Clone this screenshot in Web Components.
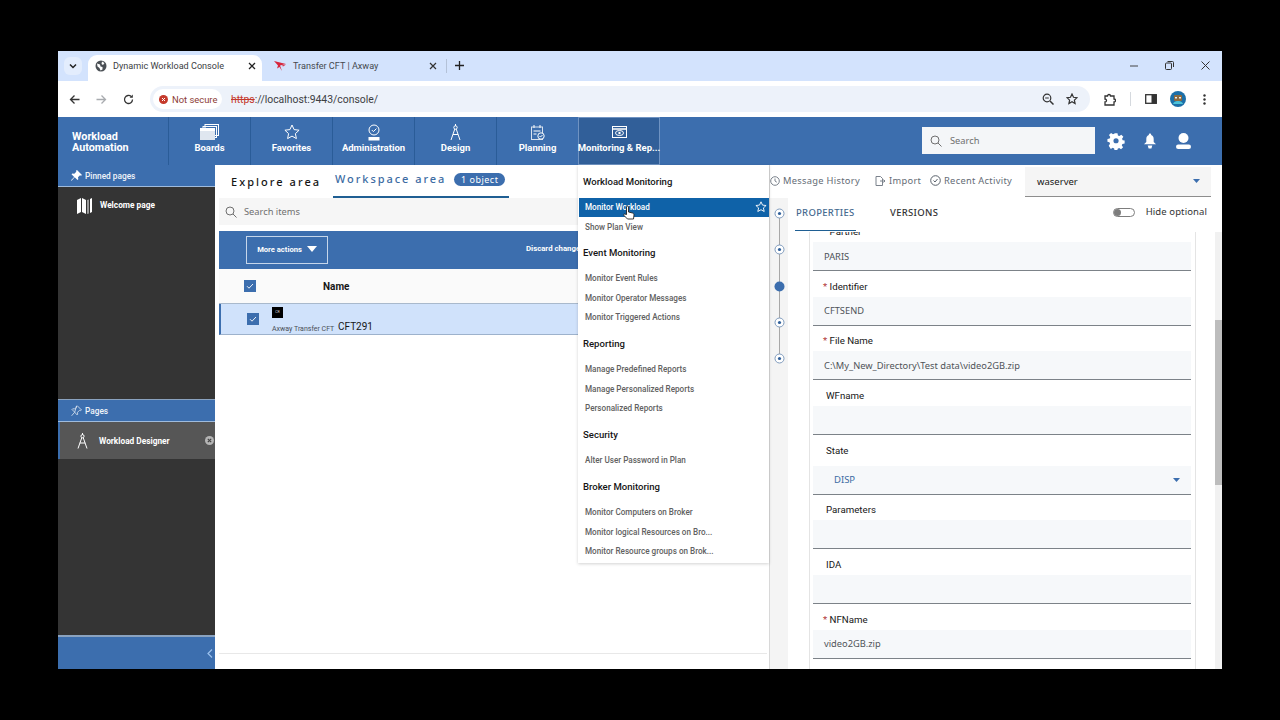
<!DOCTYPE html>
<html>
<head>
<meta charset="utf-8">
<title>Dynamic Workload Console</title>
<style>
  html, body { margin: 0; height: 720px; background: #000; overflow: hidden; }
  body { padding: 51px 58px 51px; box-sizing: border-box; font-family: Roboto, "Liberation Sans", sans-serif; }
  #win { width: 1164px; height: 618px; display: flex; flex-direction: column; background: #fff; overflow: hidden; }
  svg { display: block; }
</style>
</head>
<body>
<div id="win">
  <browser-chrome></browser-chrome>
  <app-header></app-header>
  <app-main></app-main>
</div>

<script>
function shadow(el, html) {
  el.attachShadow({mode: 'open'}).innerHTML = html;
}

class BrowserChrome extends HTMLElement {
  constructor() {
    super();
    shadow(this, `
    <style>
      :host { display: block; font-family: Roboto, "Noto Sans", sans-serif; color: #3c4043; }
      svg { display: block; flex: none; }
      #tabs { height: 30px; background: #d3e3fd; display: flex; align-items: flex-end; position: relative; }
      #menu { width: 18px; height: 18px; margin: 0 6px 6px 6px; background: #e3edfd; border-radius: 6px; display: grid; place-items: center; }
      .tab { height: 26px; display: flex; align-items: center; font-size: 9.100px; box-sizing: border-box; padding-bottom: 4px; }
      #t1 { width: 174px; background: #fff; border-radius: 9px 9px 0 0; padding-left: 7px; }
      #t1 span { margin-left: 6px; flex: 1; }
      #t1 svg:last-child { margin-right: 6px; }
      #t2 { width: 184px; padding-left: 12px; color: #45494e; }
      #t2 span { margin-left: 6px; flex: 1; }
      #t2 svg:last-child { margin-right: 9px; }
      #sep { width: 1px; height: 14px; background: #b4c2d8; margin: 0 8px 8px 0; }
      #plus { margin-bottom: 11px; }
      #ctl { margin-left: auto; display: flex; align-items: center; gap: 27px; margin-right: 12px; margin-bottom: 11px; }
      #bar { height: 36px; display: flex; align-items: center; background: #fff; }
      #nav { display: flex; align-items: center; margin-left: 11px; gap: 16px; width: 81px; }
      #omni { width: 940px; height: 26px; border-radius: 13px; background: #edf2fa; display: flex; align-items: center; box-sizing: border-box; }
      #chip { margin-left: 3px; width: 69px; height: 20px; background: #fff; border-radius: 10px; display: flex; align-items: center; gap: 4px; padding-left: 6px; box-sizing: border-box; font-size: 9.400px; color: #8c3b34; white-space: nowrap; }
      #url { margin-left: 9px; font-size: 10.400px; color: #3c4043; flex: 1; }
      #url s { color: #c5392b; }
      #omni svg.z { margin-right: 12px; }
      #right { display: flex; align-items: center; margin-left: 13px; }
      #div { width: 1px; height: 14px; background: #d5d9de; margin: 0 14px; }
    </style>
    <div id="tabs">
      <div id="menu"><svg width="10" height="10" viewBox="0 0 10 10"><path d="M2 3.500l3 3 3-3" fill="none" stroke="#222" stroke-width="1.500"/></svg></div>
      <div class="tab" id="t1">
        <svg width="12" height="12" viewBox="0 0 12 12"><circle cx="6" cy="6" r="5.500" fill="#4a4f54"/><path d="M2 3.500l3 1 .5 2 2 .5v2.500l-2 1-1-2.500L2.500 6.500zM7 1.500l2.500 1.500-1.500 2-1.500-1z" fill="#fff"/></svg>
        <span>Dynamic Workload Console</span>
        <svg width="8" height="8" viewBox="0 0 8 8"><path d="M1 1l6 6M7 1l-6 6" stroke="#222" stroke-width="1.300"/></svg>
      </div>
      <div class="tab" id="t2">
        <svg width="13" height="12" viewBox="0 0 13 12"><path d="M0 1l12 3-6 1.500L8 11 5.500 7 3 8.500 4 5.500zM12 4.500L9 6.500l-1-1z" fill="#d7263d"/></svg>
        <span>Transfer CFT | Axway</span>
        <svg width="8" height="8" viewBox="0 0 8 8"><path d="M1 1l6 6M7 1l-6 6" stroke="#333" stroke-width="1.200"/></svg>
      </div>
      <div id="sep"></div>
      <svg id="plus" width="9" height="9" viewBox="0 0 9 9"><path d="M4.500 0v9M0 4.500h9" stroke="#222" stroke-width="1.300"/></svg>
      <div id="ctl">
        <svg width="8" height="8" viewBox="0 0 8 8"><path d="M0 4h8" stroke="#444" stroke-width="1"/></svg>
        <svg width="9" height="9" viewBox="0 0 9 9"><rect x=".5" y="2" width="6" height="6.500" rx="1" fill="none" stroke="#333"/><path d="M2.500 .5h5a1 1 0 0 1 1 1V6" fill="none" stroke="#333"/></svg>
        <svg width="9" height="9" viewBox="0 0 9 9"><path d="M.5 .5l8 8M8.500 .5l-8 8" stroke="#333" stroke-width="1"/></svg>
      </div>
    </div>
    <div id="bar">
      <div id="nav">
        <svg width="11" height="11" viewBox="0 0 11 11"><path d="M10.500 5.500H1.500M5.500 1.500l-4 4 4 4" fill="none" stroke="#333" stroke-width="1.300"/></svg>
        <svg width="11" height="11" viewBox="0 0 11 11"><path d="M.5 5.500h9M5.500 1.500l4 4-4 4" fill="none" stroke="#a8abaf" stroke-width="1.300"/></svg>
        <svg width="11" height="11" viewBox="0 0 11 11"><path d="M9.500 5.500a4 4 0 1 1-1.200-2.900" fill="none" stroke="#333" stroke-width="1.300"/><path d="M9.800 .5v3.200H6.600z" fill="#333"/></svg>
      </div>
      <div id="omni">
        <div id="chip">
          <svg width="9" height="9" viewBox="0 0 9 9"><circle cx="4.500" cy="4.500" r="4.500" fill="#c5392b"/><path d="M3 3l3 3M6 3L3 6" stroke="#fff"/></svg>
          <span>Not secure</span>
        </div>
        <div id="url"><s>https</s>://localhost:9443/console/</div>
        <svg class="z" width="12" height="12" viewBox="0 0 12 12"><circle cx="5" cy="5" r="3.800" fill="none" stroke="#333" stroke-width="1.200"/><path d="M8 8l3.500 3.500" stroke="#333" stroke-width="1.500"/><path d="M3.200 5h3.600" stroke="#333"/></svg>
        <svg class="z" width="12" height="12" viewBox="0 0 12 12"><path d="M6 1l1.500 3.300 3.500.4-2.600 2.400.7 3.500L6 8.800l-3.100 1.800.7-3.500L1 4.700l3.500-.4z" fill="none" stroke="#333" stroke-width="1.200"/></svg>
      </div>
      <div id="right">
        <svg width="13" height="13" viewBox="0 0 13 13"><path d="M2 3h2.500a1.500 1.500 0 0 1 3 0H11v3a1.500 1.500 0 0 1 0 3v3H2V9a1.500 1.500 0 0 0 0-3z" fill="none" stroke="#333" stroke-width="1.300"/></svg>
        <div id="div"></div>
        <svg width="12" height="10" viewBox="0 0 12 10"><rect x=".7" y=".7" width="10.600" height="8.600" fill="none" stroke="#333" stroke-width="1.300"/><rect x="6.500" y=".7" width="5" height="8.600" fill="#333"/></svg>
        <svg style="margin-left:13px" width="16" height="16" viewBox="0 0 16 16"><circle cx="8" cy="8" r="8" fill="#1c6fa8"/><rect x="4" y="4" width="8" height="6" rx="1" fill="#8c6a3f"/><rect x="5" y="6" width="2" height="1.500" fill="#eee"/><rect x="9" y="6" width="2" height="1.500" fill="#eee"/><path d="M3 13a5 3 0 0 1 10 0z" fill="#4cc2d8"/></svg>
        <svg style="margin-left:17px" width="3" height="11" viewBox="0 0 3 11"><circle cx="1.500" cy="1.500" r="1.200" fill="#333"/><circle cx="1.500" cy="5.500" r="1.200" fill="#333"/><circle cx="1.500" cy="9.500" r="1.200" fill="#333"/></svg>
      </div>
    </div>`);
  }
}
customElements.define('browser-chrome', BrowserChrome);

class NavTile extends HTMLElement {
  constructor() {
    super();
    shadow(this, `
    <style>
      :host { display: flex; flex-direction: column; align-items: center; width: 82px; height: 48px; box-sizing: border-box; border-left: 1px solid #2a5c98; color: #fff; }
      :host([active]) { background: #315f99; border: 1px solid #6f93c2; }
      #i { height: 20px; margin-top: 5px; display: flex; align-items: center; }
      #l { font-size: 9.500px; font-weight: 700; white-space: nowrap; line-height: 12px; }
      :host([active]) #i { margin-top: 4px; }
    </style>
    <div id="i"><slot name="icon"></slot></div>
    <div id="l"><slot></slot></div>`);
  }
}
customElements.define('nav-tile', NavTile);

class AppHeader extends HTMLElement {
  constructor() {
    super();
    const s = 'fill="none" stroke="#fff" stroke-width="1"';
    shadow(this, `
    <style>
      :host { display: flex; height: 48px; background: #3c6eae; color: #fff; font-family: Roboto, sans-serif; align-items: stretch; }
      #brand { width: 110px; box-sizing: border-box; padding: 14px 0 0 14px; font-size: 10.800px; font-weight: 700; line-height: 11px; }
      #end { margin-left: auto; display: flex; align-items: center; padding-right: 31px; }
      #search { width: 173px; height: 27px; background: #f4f6f8; display: flex; align-items: center; gap: 7px; padding-left: 8px; box-sizing: border-box; color: #6f6f6f; font-size: 9.300px; margin-right: 12px; font-family: "Noto Sans", sans-serif; margin-top: -1px; }
      svg { display: block; }
    </style>
    <div id="brand">Workload<br>Automation</div>
    <nav-tile><svg slot="icon" width="19" height="16" viewBox="0 0 19 16"><rect x="5" y=".5" width="13.500" height="11" ${s}/><rect x="3" y="2.500" width="13.500" height="11" ${s}/><rect x="0" y="4" width="15" height="12" fill="#dfe6ef"/><rect x="0" y="4" width="15" height="3" fill="#fff"/></svg>Boards</nav-tile>
    <nav-tile><svg slot="icon" width="16" height="16" viewBox="0 0 16 16"><path d="M8 1l2.100 4.600 5 .6-3.700 3.400 1 5L8 12.100l-4.400 2.500 1-5L.9 6.200l5-.6z" ${s}/></svg>Favorites</nav-tile>
    <nav-tile><svg slot="icon" width="14" height="17" viewBox="0 0 14 17"><circle cx="7" cy="6" r="5" ${s}/><path d="M4.800 6l1.600 1.600 3-3" ${s}/><rect x="1.500" y="13" width="11" height="3.500" fill="#fff"/></svg>Administration</nav-tile>
    <nav-tile><svg slot="icon" width="11" height="17" viewBox="0 0 11 17"><circle cx="5.500" cy="3.500" r="1.700" ${s}/><path d="M5.500 0v2M4.800 5L1 16M6.200 5L10 16M3 10.500h5" ${s}/></svg>Design</nav-tile>
    <nav-tile><svg slot="icon" width="14" height="15" viewBox="0 0 14 15"><rect x=".5" y="2" width="11" height="12.500" ${s} stroke-opacity=".8"/><path d="M3 0v3M9 0v3M2.500 6h7M2.500 9h3" ${s}/><circle cx="10" cy="11" r="3.200" fill="#3c6eae" stroke="#fff"/><path d="M8.500 11l1 1 2-2" ${s}/></svg>Planning</nav-tile>
    <nav-tile active><svg slot="icon" width="15" height="12" viewBox="0 0 15 12"><rect x=".5" y=".5" width="14" height="11" ${s}/><path d="M.5 3h14" stroke="#fff" stroke-width="1.500"/><ellipse cx="7.500" cy="7" rx="4" ry="2.500" ${s}/><circle cx="7.500" cy="7" r="1.200" fill="#fff"/></svg>Monitoring &amp; Rep...</nav-tile>
    <div id="end">
      <div id="search"><svg width="12" height="12" viewBox="0 0 12 12"><circle cx="5" cy="5" r="4" fill="none" stroke="#6f6f6f"/><path d="M8 8l3.500 3.500" stroke="#6f6f6f"/></svg><span style="margin-left:1px">Search</span></div>
      <svg width="18" height="18" viewBox="0 0 18 18"><path fill="#fff" fill-rule="evenodd" d="M7.300 0h3.400l.5 2.600 1.700.7 2.200-1.500 2.400 2.400-1.500 2.200.7 1.700 2.300.5v3.400l-2.600.5-.7 1.700 1.500 2.200-2.400 2.400-2.200-1.500-1.700.7-.5 2.300H7.300l-.5-2.600-1.700-.7-2.200 1.500L.5 14.500l1.500-2.200-.7-1.700L-1 10V6.600l2.600-.5.7-1.700L.8 2.200 3.200-.2l2.200 1.500 1.700-.7zM9 5.800a3 3 0 1 0 0 6 3 3 0 0 0 0-6z" transform="translate(1.300 1.200) scale(.86)"/></svg>
      <svg style="margin-left:19px" width="12" height="16" viewBox="0 0 13 16"><path fill="#fff" d="M6.500 0a1.300 1.300 0 0 1 1.300 1.500C10 2.200 10.500 4 10.500 6v3l2.500 2.500H0L2.500 9V6c0-2 .5-3.800 2.700-4.500A1.300 1.300 0 0 1 6.500 0zM4 13h5l-1 3H5z"/></svg>
      <svg style="margin-left:20px" width="15" height="16" viewBox="0 0 15 16"><circle cx="7.500" cy="5" r="5" fill="#fff"/><rect x="0" y="11.500" width="15" height="4.500" rx="2.200" fill="#fff"/></svg>
    </div>`);
  }
}
customElements.define('app-header', AppHeader);

class SideHead extends HTMLElement {
  constructor() {
    super();
    shadow(this, `
    <style>
      :host { display: flex; align-items: center; gap: 3px; height: 21px; background: #3c6eae; border-bottom: 1px solid #9fbbdc; padding-left: 13px; color: #f0f4f9; font-size: 8.300px; font-weight: 500; }
    </style>
    <slot></slot>`);
  }
}
customElements.define('side-head', SideHead);

class SideBar extends HTMLElement {
  constructor() {
    super();
    shadow(this, `
    <style>
      :host { display: flex; flex-direction: column; width: 157px; flex: none; background: #343434; color: #fff; font-family: Roboto, sans-serif; }
      svg { display: block; flex: none; }
      #pin { height: 211px; background: #343434; }
      .row { display: flex; align-items: center; font-size: 8.300px; font-weight: 700; white-space: nowrap; }
      #welcome { padding: 11px 0 0 19px; gap: 8px; }
      #pages { margin-top: 1px; border-top: 1px solid #8aa2bf; }
      #current { height: 37px; background: #565656; border-left: 2px solid #3c6eae; padding-left: 17px; gap: 11px; box-sizing: border-box; position: relative; }
      #x { position: absolute; right: 1px; top: 14px; width: 9px; height: 9px; border-radius: 50%; background: #b5b5b5; overflow: hidden; }
      #spacer { flex: 1; }
      #foot { height: 34px; background: #3c6eae; border-top: 2px solid #8aa2bf; display: flex; justify-content: flex-end; align-items: center; padding-right: 2px; box-sizing: border-box; }
    </style>
    <side-head>
      <svg width="11" height="11" viewBox="0 0 11 11"><path d="M6 0l5 5-1 .7-1-.4-2 2 .3 2-.8.7L3.700 7.200.6 10.800 0 10.300 3.200 7 .5 4.200l.8-.8 2 .3 2-2-.3-1z" fill="#fff"/></svg>
      Pinned pages
    </side-head>
    <div id="pin">
      <div class="row" id="welcome">
        <svg width="15" height="16" viewBox="0 0 15 16"><path d="M0 2l4-2v14l-4 2zM5 0l4 2v14l-4-2zM10.500 2L11.500 1.500v14l-1 .5zM13 1l2-1v14l-2 1z" fill="#fff"/></svg>
        <span style="margin-top:-2px">Welcome page</span>
      </div>
    </div>
    <side-head id="pages">
      <svg width="11" height="11" viewBox="0 0 11 11"><path d="M6 .5l4.500 4.500-1 .6-1-.3-2 2 .2 2-.7.6L3.700 7.200.6 10.800M3.700 7.200L1 4.500l.7-.7 2 .2 2-2-.2-1z" fill="none" stroke="#dfe8f3" stroke-width=".8"/></svg>
      Pages
    </side-head>
    <div class="row" id="current">
      <svg width="11" height="16" viewBox="0 0 11 16"><circle cx="5.500" cy="3.200" r="1.600" fill="none" stroke="#fff"/><path d="M5.500 0v2M4.800 4.600L1 15.500M6.200 4.600L10 15.500M2.800 10h5.400" fill="none" stroke="#fff"/></svg>
      <span>Workload Designer</span>
      <div id="x"><svg width="9" height="9" viewBox="0 0 9 9"><path d="M2.800 2.800l3.400 3.400M6.200 2.800L2.800 6.200" stroke="#444" stroke-width="1.200"/></svg></div>
    </div>
    <div id="spacer"></div>
    <div id="foot"><svg width="6" height="9" viewBox="0 0 6 9"><path d="M5 .5l-4 4 4 4" fill="none" stroke="#9cc2ee" stroke-width="1.200"/></svg></div>`);
  }
}
customElements.define('side-bar', SideBar);

class CheckBox extends HTMLElement {
  constructor() {
    super();
    shadow(this, `
    <style>:host { display: block; width: 12px; height: 12px; background: #3c6eae; } svg { display: block; }</style>
    <svg width="12" height="12" viewBox="0 0 12 12"><path d="M3 6.200l2 2 4-4.200" fill="none" stroke="#fff" stroke-width=".9"/></svg>`);
  }
}
customElements.define('check-box', CheckBox);

class WorkspacePanel extends HTMLElement {
  constructor() {
    super();
    shadow(this, `
    <style>
      :host { display: block; width: 555px; flex: none; height: 504px; box-sizing: border-box; border-right: 1px solid #d8d8d8; position: relative; background: #fff; font-family: "Noto Sans", Roboto, sans-serif; }
      svg { display: block; flex: none; }
      #tabs { height: 33px; display: flex; align-items: center; padding-left: 16px; }
      #t1 { font-size: 11px; font-weight: 500; letter-spacing: 2.050px; color: #161616; width: 102px; white-space: nowrap; }
      #t2 { width: 176px; height: 33px; margin-left: 0; border-bottom: 2px solid #1f5f93; box-sizing: border-box; display: flex; align-items: center; padding-left: 2px; gap: 7px; }
      #t2 span:first-child { font-size: 11px; font-weight: 500; letter-spacing: 1.950px; color: #3d6ca3; white-space: nowrap; margin-top: -4px; width: 112px; flex: none; }
      #pill { background: #3c6eae; color: #fff; border-radius: 7px; font-size: 9px; height: 13px; line-height: 13px; padding: 0 7px; margin-top: -3px; letter-spacing: .5px; white-space: nowrap; }
      #search { margin-left: 4px; height: 27px; background: #f6f6f6; display: flex; align-items: center; padding-left: 6px; gap: 7px; font-size: 9.300px; color: #6f6f6f; }
      #bar { margin: 6px 0 0 4px; height: 38px; background: #3c6eae; display: flex; align-items: center; color: #fff; font-family: Roboto, sans-serif; }
      #more { margin-left: 27px; width: 82px; height: 28px; box-sizing: border-box; border: 1px solid #c6d6ea; display: flex; align-items: center; justify-content: center; gap: 5px; font-size: 7.600px; font-weight: 700; padding-bottom: 2px; }
      #disc { margin-left: 198px; font-size: 7.800px; font-weight: 700; white-space: nowrap; margin-top: -4px; }
      #thead { margin-left: 4px; height: 35px; background: #fafafa; display: flex; align-items: center; padding-left: 25px; border-bottom: 1px solid #a9b9cc; box-sizing: border-box; }
      #thead b { margin-left: 67px; font-family: Roboto, sans-serif; font-size: 10px; font-weight: 700; color: #161616; }
      #row { margin-left: 4px; height: 31px; background: #d0e2fb; border-left: 2px solid #3c6eae; border-bottom: 1px solid #9db2cc; display: flex; align-items: center; padding-left: 26px; box-sizing: border-box; }
      #tall { margin-left: 13px; display: flex; flex-direction: column; gap: 7px; width: 66px; margin-top: 2px; }
      #logo { width: 11px; height: 11px; background: #000; color: #ddd; font-size: 3.500px; line-height: 11px; text-align: center; font-family: Roboto, sans-serif; }
      #sub { font-size: 7px; color: #4a4f57; white-space: nowrap; line-height: 8px; font-family: Roboto, sans-serif; }
      #cft { font-size: 10px; color: #161616; margin-top: 15px; margin-left: 0; font-family: Roboto, sans-serif; }
      #spacer { position: absolute; left: 4px; right: 2px; bottom: 15px; border-bottom: 1px solid #e8e8e8; }
    </style>
    <div id="tabs">
      <span id="t1">Explore area</span>
      <div id="t2"><span>Workspace area</span><span id="pill">1 object</span></div>
    </div>
    <div id="search"><svg width="12" height="12" viewBox="0 0 12 12"><circle cx="5" cy="5" r="4" fill="none" stroke="#6f6f6f"/><path d="M8 8l3.500 3.500" stroke="#6f6f6f"/></svg><span>Search items</span></div>
    <div id="bar">
      <div id="more">More actions <svg width="10" height="6" viewBox="0 0 10 6"><path d="M0 0h10L5 6z" fill="#fff"/></svg></div>
      <div id="disc">Discard changes</div>
    </div>
    <div id="thead"><check-box></check-box><b>Name</b></div>
    <div id="row">
      <check-box></check-box>
      <div id="tall"><div id="logo">CR</div><div id="sub">Axway Transfer CFT</div></div>
      <span id="cft">CFT291</span>
    </div>
    <div id="spacer"></div>`);
  }
}
customElements.define('workspace-panel', WorkspacePanel);

class MonitorMenu extends HTMLElement {
  constructor() {
    super();
    const groups = [
      ['Workload Monitoring', 'Monitor Workload', 'Show Plan View'],
      ['Event Monitoring', 'Monitor Event Rules', 'Monitor Operator Messages', 'Monitor Triggered Actions'],
      ['Reporting', 'Manage Predefined Reports', 'Manage Personalized Reports', 'Personalized Reports'],
      ['Security', 'Alter User Password in Plan'],
      ['Broker Monitoring', 'Monitor Computers on Broker', 'Monitor logical Resources on Bro...', 'Monitor Resource groups on Brok...']
    ];
    let body = '';
    groups.forEach(g => {
      body += `<h4>${g[0]}</h4>`;
      g.slice(1).forEach(i => {
        if (i === 'Monitor Workload') {
          body += `<div class="it on">${i}<svg width="12" height="12" viewBox="0 0 12 12"><path d="M6 .8l1.500 3.300 3.600.4-2.700 2.400.8 3.600L6 8.700l-3.200 1.800.8-3.600L.9 4.500l3.600-.4z" fill="none" stroke="#fff" stroke-width=".9"/></svg></div>`;
        } else {
          body += `<div class="it">${i}</div>`;
        }
      });
    });
    shadow(this, `
    <style>
      :host { position: absolute; left: 363px; top: 0; width: 191px; height: 398px; background: #fff; box-shadow: 0 1px 3px rgba(0,0,0,.18); font-family: Roboto, sans-serif; z-index: 2; display: block; box-sizing: border-box; padding-top: 7.500px; }
      h4 { margin: 7.200px 0 0; padding-left: 5px; font-size: 9.550px; font-weight: 500; color: #161616; height: 18px; line-height: 18px; }
      h4:first-of-type { margin-top: 0; }
      .it { height: 19.600px; line-height: 19.600px; padding-left: 7px; font-size: 8.150px; color: #616161; white-space: nowrap; font-weight: 500; }
      h4 + .it { margin-top: 7px; }
      h4 + .on { height: 19px; margin: 7px 0 1px 1px; padding-left: 6px; background: #0f62a8; color: #fff; display: flex; align-items: center; justify-content: space-between; padding-right: 2px; line-height: 19px; }
      #hand { position: absolute; left: 45px; top: 40px; }
    </style>
    ${body}
    <svg id="hand" width="12" height="17" viewBox="0 0 12 17"><path d="M3.500 9.500V2a1 1 0 0 1 2 0v5l4 1c1 .3 1.500 1 1.500 2l-.5 4H4.500L1 10.500c-.8-1 .3-2 1.200-1.300z" fill="#fff" stroke="#222" stroke-width=".9"/></svg>`);
  }
}
customElements.define('monitor-menu', MonitorMenu);

class FormField extends HTMLElement {
  constructor() {
    super();
    shadow(this, `
    <style>
      :host { display: flex; flex-direction: column; justify-content: flex-end; height: 54.600px; font-family: Roboto, sans-serif; }
      #lab { font-size: 9.700px; color: #161616; padding-left: 13px; height: 20px; line-height: 20px; }
      :host([req]) #lab { padding-left: 10px; }
      #req { color: #b23a3a; display: none; }
      :host([req]) #req { display: inline; }
      #in { height: 29px; box-sizing: border-box; background: #f6f8fa; border-bottom: 1px solid #7c8288; padding-left: 11px; display: flex; align-items: center; font-size: 9.300px; color: #4f5358; font-family: "Noto Sans", Roboto, sans-serif; }
      :host([sel]) { height: 60px; }
      :host([sel]) #in { padding-left: 21px; color: #3d6ca3; font-size: 9.500px; justify-content: space-between; padding-right: 11px; }
      :host([sel]) #lab { height: 25px; }
    </style>
    <div id="lab"><span id="req">* </span><span id="t"></span></div>
    <div id="in"><slot></slot></div>`);
  }
  connectedCallback() {
    this.shadowRoot.getElementById('t').textContent = this.getAttribute('label');
  }
}
customElements.define('form-field', FormField);

class PropsPanel extends HTMLElement {
  constructor() {
    super();
    shadow(this, `
    <style>
      :host { display: flex; flex-direction: column; flex: 1; min-width: 0; height: 504px; background: #fff; font-family: "Noto Sans", Roboto, sans-serif; }
      svg { display: block; flex: none; }
      #top { height: 33px; display: flex; align-items: center; font-size: 9.300px; color: #646b75; letter-spacing: .3px; flex: none; padding-bottom: 2px; box-sizing: border-box; }
      #top .a { display: flex; align-items: center; gap: 3px; white-space: nowrap; }
      #sel { margin-left: 11px; width: 186px; height: 30px; margin-top: 2px; background: #f5f5f5; border-bottom: 1px solid #8d8d8d; box-sizing: border-box; display: flex; align-items: center; justify-content: space-between; padding: 0 11px 0 12px; color: #161616; letter-spacing: 0; font-size: 9.500px; }
      #lower { flex: 1; display: flex; min-height: 0; }
      #steps { width: 18px; background: #f4f4f4; display: flex; flex-direction: column; align-items: center; padding-top: 10px; box-sizing: border-box; flex: none; }
      #steps i { display: block; width: 1px; height: 27.250px; background: #a8a8a8; margin: -1px 0; flex: none; }
      #steps svg { position: relative; }
      #main { flex: 1; min-width: 0; display: flex; flex-direction: column; }
      #head { height: 34px; display: flex; align-items: center; padding: 0 0 6px 8px; box-sizing: border-box; position: relative; flex: none; font-size: 9.500px; letter-spacing: .3px; font-weight: 500; }
      #head .p { color: #466a8f; width: 94px; }
      #head .v { color: #333; }
      #under { position: absolute; left: 7px; bottom: 1px; width: 61px; border-bottom: 1px solid #1f5f93; }
      #opt { margin-left: auto; display: flex; align-items: center; gap: 11px; padding-right: 15px; color: #333; font-weight: 400; letter-spacing: .1px; font-size: 9.500px; margin-top: -1px; }
      #tog { width: 22px; height: 9px; border: 1px solid #7d7d7d; border-radius: 5px; box-sizing: border-box; position: relative; background: #fff; margin-top: 1px; }
      #tog::before { content: ""; position: absolute; left: 0; top: 0; width: 7px; height: 7px; border-radius: 50%; background: #7d7d7d; }
      #form { flex: 1; min-height: 0; overflow: hidden; display: flex; }
      #scroll { flex: 1; margin-left: 21px; border-left: 1px solid #e4e4e4; border-right: 1px solid #e4e4e4; overflow: hidden; padding: 0 4px 0 3px; margin-right: 19px; min-width: 0; }
      #fields { margin-top: -15.600px; }
      #sb { width: 7px; background: #f1f1f1; flex: none; }
      #sb div { margin-top: 88px; height: 165px; background: #bdbdbd; }
    </style>
    <div id="top">
      <span class="a" style="width:105px"><svg width="10" height="10" viewBox="0 0 10 10"><circle cx="5" cy="5" r="4.300" fill="none" stroke="#7b828c"/><path d="M5 2.500V5l1.800 1.200" fill="none" stroke="#7b828c"/></svg>Message History</span>
      <span class="a" style="width:55px"><svg width="11" height="10" viewBox="0 0 11 10"><path d="M1 .5h4.500l2 2v7H1zM5 5h5M8.500 3.500L10 5 8.500 6.500" fill="none" stroke="#7b828c"/></svg>Import</span>
      <span class="a" style="width:84px"><svg width="11" height="11" viewBox="0 0 11 11"><circle cx="5.500" cy="5.500" r="4.800" fill="none" stroke="#59616b"/><path d="M3.500 5.500l1.500 1.500 2.500-3" fill="none" stroke="#59616b"/></svg>Recent Activity</span>
      <div id="sel"><span>waserver</span><svg width="7" height="4" viewBox="0 0 7 4"><path d="M0 0h7L3.500 4z" fill="#3c6eae"/></svg></div>
    </div>
    <div id="lower">
      <div id="steps">
        ${[0,1,2,3,4].map(n => {
          const c = n === 2
            ? '<svg width="11" height="11" viewBox="0 0 11 11"><circle cx="5.500" cy="5.500" r="5" fill="#3c6eae"/></svg>'
            : '<svg width="11" height="11" viewBox="0 0 11 11"><circle cx="5.500" cy="5.500" r="4.500" fill="#fff" stroke="#7f9bbd"/><circle cx="5.500" cy="5.500" r="1.600" fill="#2f5f9a"/></svg>';
          return c + (n < 4 ? '<i></i>' : '');
        }).join('')}
      </div>
      <div id="main">
        <div id="head">
          <span class="p">PROPERTIES</span><span class="v">VERSIONS</span>
          <div id="under"></div>
          <div id="opt"><div id="tog"></div><span>Hide optional</span></div>
        </div>
        <div id="form">
          <div id="scroll"><div id="fields">
            <form-field req label="Partner">PARIS</form-field>
            <form-field req label="Identifier">CFTSEND</form-field>
            <form-field req label="File Name">C:\\My_New_Directory\\Test data\\video2GB.zip</form-field>
            <form-field label="WFname"></form-field>
            <form-field sel label="State"><span>DISP</span><svg width="7" height="4" viewBox="0 0 7 4" style="display:block"><path d="M0 0h7L3.500 4z" fill="#3c6eae"/></svg></form-field>
            <form-field label="Parameters"></form-field>
            <form-field label="IDA"></form-field>
            <form-field req label="NFName">video2GB.zip</form-field>
          </div></div>
          <div id="sb"><div></div></div>
        </div>
      </div>
    </div>`);
  }
}
customElements.define('props-panel', PropsPanel);

class AppMain extends HTMLElement {
  constructor() {
    super();
    shadow(this, `
    <style>
      :host { display: flex; flex: 1; min-height: 0; position: relative; }
      #content { flex: 1; min-width: 0; display: flex; position: relative; }
    </style>
    <side-bar></side-bar>
    <div id="content">
      <workspace-panel></workspace-panel>
      <props-panel></props-panel>
      <monitor-menu></monitor-menu>
    </div>`);
  }
}
customElements.define('app-main', AppMain);
</script>
</body>
</html>
